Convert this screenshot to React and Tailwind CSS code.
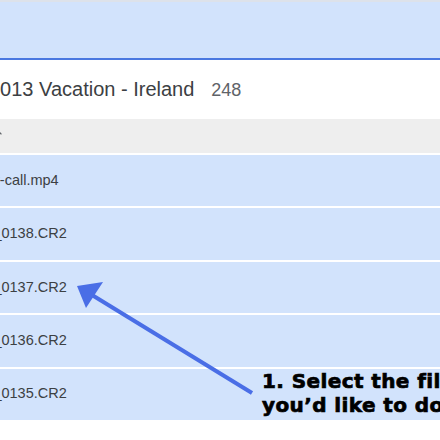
import { ArrowUp } from 'lucide-react';

const files = [
  { name: 'family-call.mp4', offset: 'ml-[-38px]' },
  { name: 'IMG_0138.CR2', offset: 'ml-[-34px]' },
  { name: 'IMG_0137.CR2', offset: 'ml-[-34px]' },
  { name: 'IMG_0136.CR2', offset: 'ml-[-34px]' },
  { name: 'IMG_0135.CR2', offset: 'ml-[-34px]' },
];

const App = () => {
  return (
    <div className="relative w-[440px] h-[440px] overflow-hidden bg-white font-['Liberation_Sans',Arial,sans-serif]">
      {/* Toolbar band */}
      <div className="h-[2px] bg-[#dde2ea]" />
      <div className="h-[56px] bg-[#d2e3fc]" />
      <div className="h-[2px] bg-[#4a78e0]" />

      {/* Folder title */}
      <div className="h-[59px] flex items-baseline pt-[14px] whitespace-nowrap">
        <span className="ml-[-11px] text-[20px] text-[#3c4043]">2013 Vacation - Ireland</span>
        <span className="ml-[17px] text-[18px] text-[#5f6368]">248</span>
      </div>

      {/* Column header */}
      <div className="h-[34px] bg-[#eeeeee] flex items-center">
        <ArrowUp className="w-[14px] h-[14px] ml-[-10px] -mt-[4px] text-[#5f6368]" strokeWidth={2} />
      </div>

      {/* File rows */}
      <div className="flex flex-col">
        {files.map((file) => (
          <div
            key={file.name}
            className="h-[53.4px] border-t-2 border-white bg-[#d2e3fc] flex items-center whitespace-nowrap"
          >
            <span className={`${file.offset} text-[14.5px] text-[#3c4043]`}>{file.name}</span>
          </div>
        ))}
      </div>

      {/* Annotation arrow */}
      <svg className="absolute inset-0 pointer-events-none" width="440" height="440" viewBox="0 0 440 440">
        <line x1="252" y1="393" x2="92" y2="295" stroke="#4a6ee6" strokeWidth="4" />
        <polygon points="77,286 103,282 86,308" fill="#4a6ee6" />
      </svg>

      {/* Annotation text */}
      <div className="absolute left-[262px] top-[369px] whitespace-nowrap font-['DejaVu_Sans',sans-serif] font-bold text-[20px] tracking-[0.4px] leading-[24px] text-black [-webkit-text-stroke:0.7px_black]">
        <div>1. Select the file(s)</div>
        <div>you’d like to download</div>
      </div>
    </div>
  );
};

export default App;
